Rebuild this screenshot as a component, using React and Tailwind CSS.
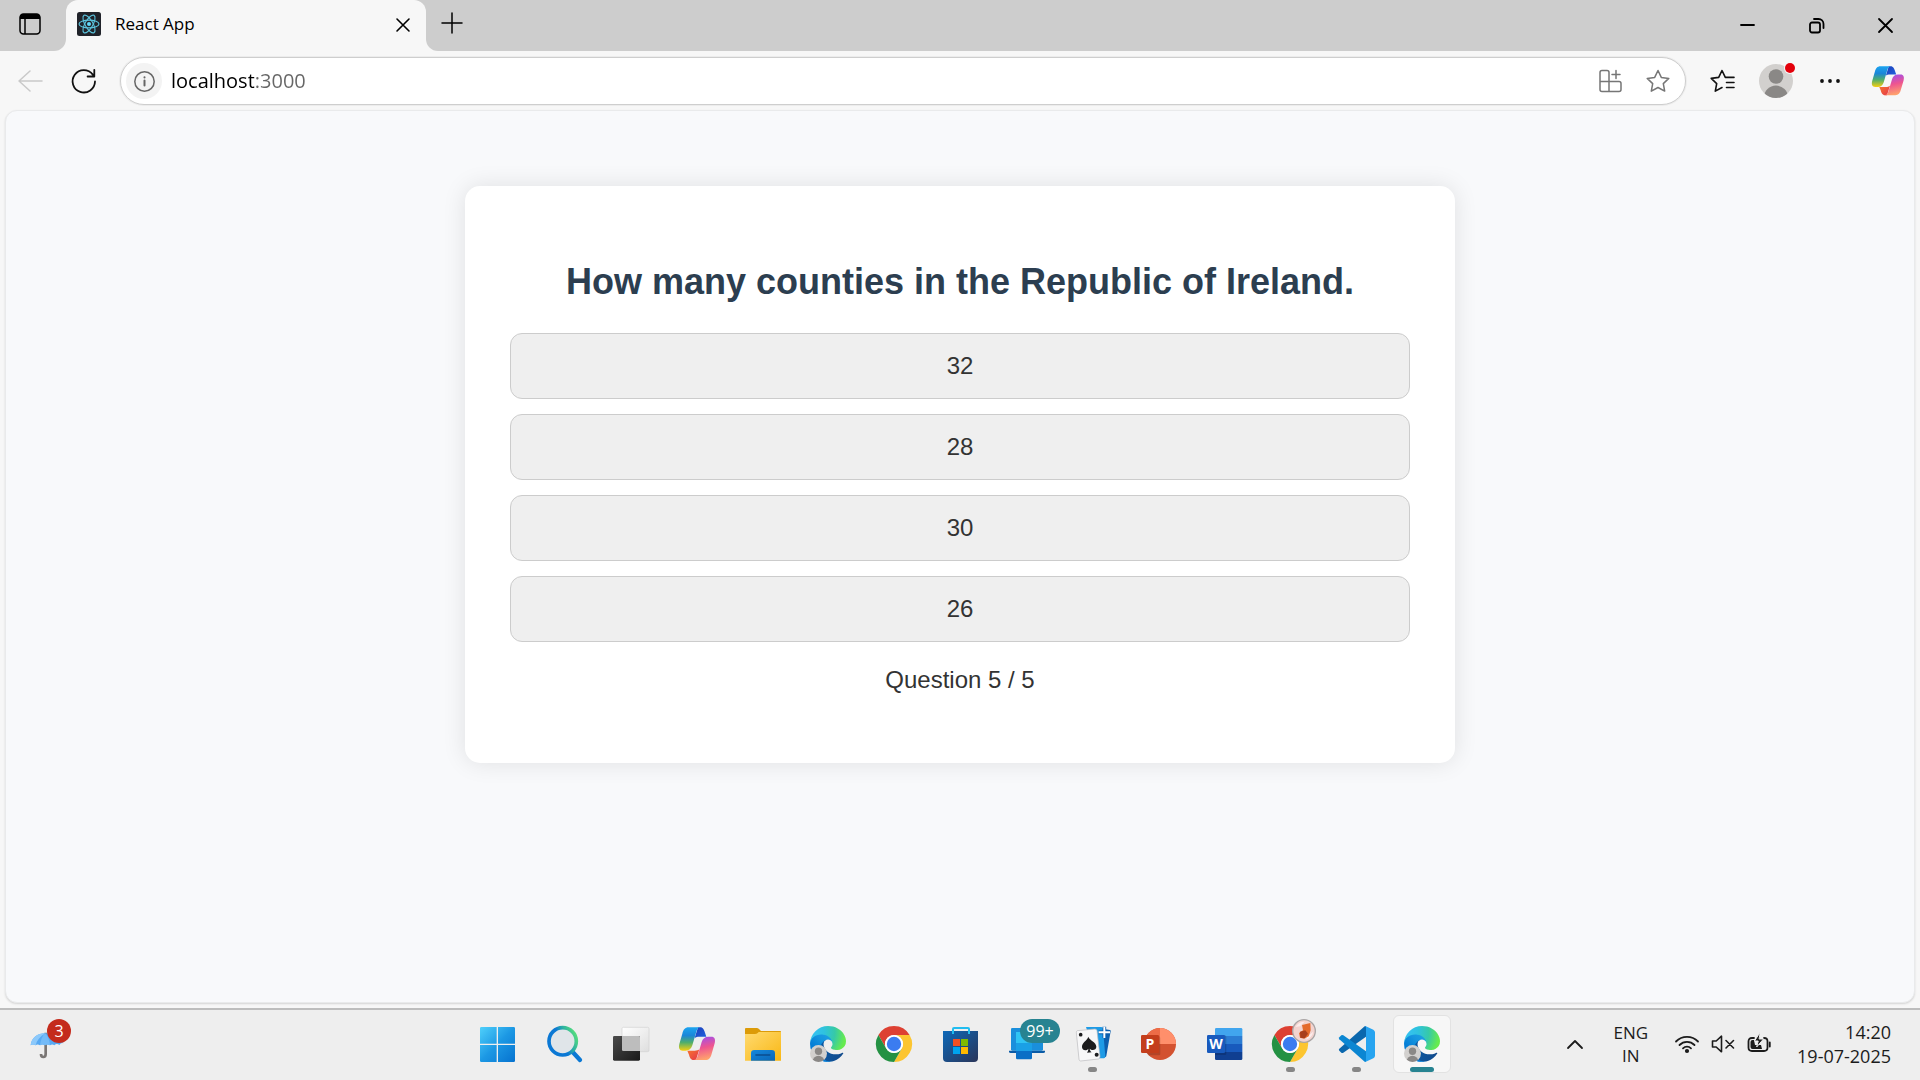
import React, { useId, useState } from "react";

const UI = "font-['Open_Sans','Noto_Sans',sans-serif]";

function Icon({ className = "", box = "0 0 24 24", children, ...rest }) {
  return (
    <svg viewBox={box} fill="none" aria-hidden="true" className={`shrink-0 overflow-visible ${className}`} {...rest}>
      {children}
    </svg>
  );
}

function Line({ className, box, width = 1.5, children }) {
  return (
    <Icon className={className} box={box} stroke="currentColor" strokeWidth={width} strokeLinecap="round" strokeLinejoin="round">
      {children}
    </Icon>
  );
}

function ReactLogo() {
  return (
    <Icon className="size-6">
      <rect width="24" height="24" rx="2.5" fill="#20232a" />
      <g stroke="#5cc5de" strokeWidth="1.1">
        <ellipse cx="12" cy="12" rx="10" ry="3.9" />
        <ellipse cx="12" cy="12" rx="10" ry="3.9" transform="rotate(60 12 12)" />
        <ellipse cx="12" cy="12" rx="10" ry="3.9" transform="rotate(120 12 12)" />
      </g>
      <circle cx="12" cy="12" r="2" fill="#61dafb" />
    </Icon>
  );
}

function CopilotLogo({ className }) {
  const id = useId();
  return (
    <Icon className={className} box="0 0 108 108">
      <defs>
        <linearGradient id={id + "a"} x1="0" y1="0" x2="0" y2="1">
          <stop offset="0" stopColor="#1ba4f0" />
          <stop offset=".35" stopColor="#1b86d8" />
          <stop offset=".65" stopColor="#4fae6c" />
          <stop offset="1" stopColor="#f6cf10" />
        </linearGradient>
        <linearGradient id={id + "b"} x1=".2" y1="0" x2=".4" y2="1">
          <stop offset="0" stopColor="#9b4df0" />
          <stop offset=".5" stopColor="#ee5590" />
          <stop offset="1" stopColor="#ffa36c" />
        </linearGradient>
        <linearGradient id={id + "c"} x1="0" y1="0" x2="1" y2="1">
          <stop offset="0" stopColor="#1d3fb8" />
          <stop offset="1" stopColor="#1f62e0" />
        </linearGradient>
        <linearGradient id={id + "d"} x1="0" y1="0" x2="1" y2="1">
          <stop offset="0" stopColor="#f7772e" />
          <stop offset="1" stopColor="#e4354b" />
        </linearGradient>
      </defs>
      <path d="M60 4h6c10 0 12 8 15 16l4 12H64c-6 0-10 1-14 4z" fill={`url(#${id}c)`} />
      <path d="M54 102h-6c-10 0-13-8-15-16l-5-12h22c6 0 10-1 14-4z" fill={`url(#${id}d)`} />
      <path d="M32 4h36c-8 0-11 6-13 13L43 58c-3 10-10 16-20 16h-9C4 74 1 66 4 54l9-31C16 11 21 4 32 4z" fill={`url(#${id}a)`} />
      <path d="M82 102H46c8 0 11-6 13-13l12-41c3-10 10-16 20-16h9c10 0 13 8 10 20l-9 31c-3 12-8 19-19 19z" fill={`url(#${id}b)`} />
    </Icon>
  );
}

function WindowsLogo() {
  const id = useId();
  return (
    <Icon className="size-9" box="0 0 108 108">
      <defs>
        <linearGradient id={id} gradientUnits="userSpaceOnUse" x1="0" y1="3" x2="105" y2="108">
          <stop offset="0" stopColor="#4fd0fb" />
          <stop offset=".5" stopColor="#1c98e4" />
          <stop offset="1" stopColor="#0672cf" />
        </linearGradient>
      </defs>
      <path fill={`url(#${id})`} d="M4 3h46v50H0V7a4 4 0 0 1 4-4zM54 3h47a4 4 0 0 1 4 4v46H54zM0 57h50v51H4a4 4 0 0 1-4-4zM54 57h51v47a4 4 0 0 1-4 4H54z" />
    </Icon>
  );
}

function SearchLogo() {
  const id = useId();
  return (
    <Icon className="size-9" box="0 0 108 108">
      <defs>
        <linearGradient id={id} x1="0" y1=".7" x2="1" y2=".2">
          <stop offset=".45" stopColor="#0b78d4" />
          <stop offset=".7" stopColor="#2fb3a0" />
          <stop offset="1" stopColor="#58e07a" />
        </linearGradient>
      </defs>
      <path d="M80 78l22 24" stroke="#0b78d4" strokeWidth="13" strokeLinecap="round" />
      <circle cx="50" cy="46" r="41" fill="#e0e5e9" stroke={`url(#${id})`} strokeWidth="11" />
    </Icon>
  );
}

function TaskViewLogo() {
  const id = useId();
  return (
    <Icon className="size-9" box="0 0 108 108">
      <defs>
        <linearGradient id={id + "a"} x1="0" y1="0" x2="1" y2="1">
          <stop offset="0" stopColor="#4a4a4a" />
          <stop offset="1" stopColor="#191919" />
        </linearGradient>
        <linearGradient id={id + "b"} x1="0" y1="0" x2="1" y2="1">
          <stop offset="0" stopColor="#fff" />
          <stop offset="1" stopColor="#dedede" />
        </linearGradient>
      </defs>
      <rect x="30" y="4" width="81" height="73" rx="4" fill={`url(#${id}b)`} stroke="#d2d2d2" strokeWidth="2" />
      <rect x="3" y="30" width="81" height="74" rx="4" fill={`url(#${id}a)`} />
      <path d="M30 30h50a4 4 0 0 1 4 4v41H34a4 4 0 0 1-4-4z" fill="#bdbdbd" />
    </Icon>
  );
}

function FolderLogo() {
  const id = useId();
  return (
    <Icon className="size-9" box="0 0 108 108">
      <defs>
        <linearGradient id={id + "a"} x1="0" y1="0" x2="1" y2="1">
          <stop offset="0" stopColor="#ffda70" />
          <stop offset="1" stopColor="#f9b714" />
        </linearGradient>
        <linearGradient id={id + "b"} x1="0" y1="0" x2="1" y2="1">
          <stop offset="0" stopColor="#1688dc" />
          <stop offset="1" stopColor="#0a66b8" />
        </linearGradient>
      </defs>
      <path d="M3 8q0-2 3-2h32q4 0 7 3l6 6h58q2 0 2 3v14H3z" fill="#dc9b08" />
      <path d="M3 24h30q5 0 8-3l3-3h67v86H3z" fill={`url(#${id}a)`} />
      <path d="M21 104V82q0-10 10-10h52q10 0 10 10v22z" fill={`url(#${id}b)`} />
      <path d="M36 87h41" stroke="#0b4c8e" strokeWidth="5" strokeLinecap="round" />
    </Icon>
  );
}

function Avatar({ className }) {
  const id = useId();
  return (
    <Icon className={className} box="0 0 34 34">
      <clipPath id={id}>
        <circle cx="17" cy="17" r="17" />
      </clipPath>
      <circle cx="17" cy="17" r="17" fill="#d2d0ce" />
      <g clipPath={`url(#${id})`} fill="#8a8886">
        <circle cx="17" cy="12.5" r="7.3" />
        <circle cx="17" cy="33.5" r="12" />
      </g>
    </Icon>
  );
}

function EdgeLogo() {
  const id = useId();
  return (
    <span className="relative block size-9">
      <Icon className="size-9" box="0 0 256 256">
        <defs>
          <linearGradient id={id + "a"} gradientUnits="userSpaceOnUse" x1="63" y1="177" x2="241" y2="177">
            <stop offset="0" stopColor="#0c59a4" />
            <stop offset="1" stopColor="#114a8b" />
          </linearGradient>
          <linearGradient id={id + "b"} gradientUnits="userSpaceOnUse" x1="157" y1="95" x2="46" y2="220">
            <stop offset="0" stopColor="#1b9de2" />
            <stop offset=".3" stopColor="#1595df" />
            <stop offset=".7" stopColor="#0680d7" />
            <stop offset="1" stopColor="#0078d4" />
          </linearGradient>
          <radialGradient id={id + "c"} gradientUnits="userSpaceOnUse" cx="26" cy="45" r="250">
            <stop offset="0" stopColor="#35c1f1" />
            <stop offset=".3" stopColor="#2fc2df" />
            <stop offset=".6" stopColor="#36c9a8" />
            <stop offset=".9" stopColor="#66eb4e" />
          </radialGradient>
        </defs>
        <path
          transform="translate(-4.6 -4.9)"
          fill={`url(#${id}a)`}
          d="M235.68 195.46a93.73 93.73 0 0 1-10.54 4.71 101.87 101.87 0 0 1-35.9 6.46c-47.32 0-88.54-32.55-88.54-74.32A31.48 31.48 0 0 1 117.13 105c-42.8 1.8-53.8 46.4-53.8 72.53 0 73.88 68.09 81.37 82.76 81.37 7.91 0 19.84-2.3 27-4.56l1.31-.44a128.34 128.34 0 0 0 66.6-52.8 4 4 0 0 0-5.32-5.64Z"
        />
        <path
          fill={`url(#${id}b)`}
          d="M105.73 241.42a79.2 79.2 0 0 1-22.74-21.34 80.72 80.72 0 0 1 29.53-120c3.12-1.47 8.45-4.13 15.54-4a32.35 32.35 0 0 1 25.69 13 31.88 31.88 0 0 1 6.36 18.66c0-.21 24.46-79.6-80-79.6-43.9 0-80 41.66-80 78.21a130.15 130.15 0 0 0 12.11 56 128 128 0 0 0 156.38 67.11 75.55 75.55 0 0 1-62.78-8Z"
        />
        <path
          fill={`url(#${id}c)`}
          d="M152.29 148.86c-.81 1.05-3.3 2.5-3.3 5.66 0 2.61 1.7 5.12 4.72 7.23 14.38 10 41.49 8.68 41.56 8.68a59.56 59.56 0 0 0 30.27-8.35 61.38 61.38 0 0 0 30.43-52.88c.26-22.41-8-37.31-11.34-43.91C223.45 23.93 177.73 0 128 0A128 128 0 0 0 0 126.2c.48-36.54 36.8-66.05 80-66.05 3.5 0 23.46.34 42 10.07 16.34 8.58 24.9 18.94 30.85 29.21 6.18 10.67 7.28 24.15 7.28 29.52 0 5.37-2.74 13.33-7.84 19.91Z"
        />
      </Icon>
      <span className="absolute bottom-0 left-0">
        <Avatar className="size-[17px]" />
      </span>
    </span>
  );
}

function ChromeLogo() {
  const arc = "M7.2 27a54 54 0 0 1 93.6 0H54a27 27 0 0 0-23.4 40.5z";
  return (
    <Icon className="size-9" box="0 0 108 108">
      <path d={arc} fill="#dd4032" />
      <path d={arc} fill="#fcc530" transform="rotate(120 54 54)" />
      <path d={arc} fill="#249143" transform="rotate(240 54 54)" />
      <circle cx="54" cy="54" r="27" fill="#fff" />
      <circle cx="54" cy="54" r="21.5" fill="#3b7cf0" />
    </Icon>
  );
}

function ChromeProfileLogo() {
  return (
    <span className="relative block size-9">
      <ChromeLogo />
      <span className="absolute -top-[7px] -right-[8px]">
        <Icon className="size-6" box="0 0 72 72">
          <circle cx="36" cy="36" r="34" fill="#f3d3cf" stroke="#a9a5a5" strokeWidth="4" />
          <path d="M10 24Q20 8 38 8L24 22zM42 62q18-6 22-24L46 52z" fill="#fbeceb" />
          <path d="M30 18l25-6 1 22-6 18-14 7-12-3-3-14 12-8z" fill="#e46a2c" />
          <path d="M24 38l16-4 8 10-10 14-13-2z" fill="#a83e1c" />
        </Icon>
      </span>
    </span>
  );
}

function StoreLogo() {
  const id = useId();
  return (
    <Icon className="size-9" box="0 0 108 108">
      <defs>
        <linearGradient id={id} x1="0" y1="0" x2="1" y2="1">
          <stop offset="0" stopColor="#0d68b8" />
          <stop offset="1" stopColor="#2a3559" />
        </linearGradient>
      </defs>
      <path d="M3 15h105v81q0 12-12 12H15Q3 108 3 96z" fill={`url(#${id})`} />
      <path d="M33 24V9q0-3 3-3h42q3 0 3 3v15" stroke="#21bdf0" strokeWidth="6" />
      <path d="M33 39h21v21H33z" fill="#f25022" />
      <path d="M57 39h21v21H57z" fill="#7fba00" />
      <path d="M33 63h21v21H33z" fill="#00a4ef" />
      <path d="M57 63h21v21H57z" fill="#ffb900" />
    </Icon>
  );
}

function PhoneLinkLogo() {
  return (
    <span className="relative block size-9">
      <Icon className="size-9" box="0 0 108 108">
        <rect x="9" y="6" width="96" height="68" rx="4" fill="#1a8fdc" />
        <path d="M3 74h108v3q0 4-5 4H8q-5 0-5-4z" fill="#0b5ba6" />
        <path d="M24 18h48v34H24z" fill="#2fc4f4" />
        <path d="M24 52h48v24H24z" fill="#1aa0e6" />
        <path d="M24 75h48v21q0 4-4 4H28q-4 0-4-4z" fill="#0a6fc6" />
      </Icon>
      <span className={`absolute -top-[7px] left-3 flex h-6 w-10 items-center justify-center rounded-full bg-[#278391] text-base text-white ${UI}`}>99+</span>
    </span>
  );
}

function SolitaireLogo() {
  return (
    <Icon className="size-9" box="0 0 108 108">
      <path d="M56 4l52 8q3 1 2 4L97 90q-1 4-4 3l-20 2z" fill="#0d5fae" />
      <path d="M36 3h46q4 1 5 5l7 84q0 4-4 5H66z" fill="#1e9be6" />
      <path d="M10 14l53-5q5 0 6 5l9 78q0 6-5 7l-53 6q-4 0-5-5L7 20q0-5 3-6z" fill="#f7f7f8" stroke="#b9b9bc" strokeWidth="2" />
      <path d="M43 32c4 12 24 16 24 30 0 10-13 13-20 6 1 6 3 9 6 11l-14 1c2-3 4-7 4-12-6 8-18 6-19-4C23 50 39 44 43 32z" fill="#1c1c1e" />
      <circle cx="20" cy="26" r="5.500" fill="#1c1c1e" />
      <circle cx="68" cy="86" r="6" fill="#1c1c1e" />
      <path d="M91 2v34M74 19h34" stroke="#0d5fae" strokeWidth="11" />
      <path d="M91 2v34M74 19h34" stroke="#fff" strokeWidth="6" />
    </Icon>
  );
}

function OfficeLetter({ children }) {
  return (
    <span className="absolute top-[9px] left-px flex size-[18px] items-center justify-center font-['Open_Sans','Noto_Sans',sans-serif] text-sm font-bold text-white" aria-hidden="true">
      {children}
    </span>
  );
}

function PowerPointLogo() {
  return (
    <span className="relative block size-9">
      <Icon className="size-9" box="0 0 108 108">
        <circle cx="60" cy="54" r="48" fill="#d35230" />
        <path d="M60 6a48 48 0 0 0-48 48h48z" fill="#ed6c47" />
        <path d="M60 6a48 48 0 0 1 48 48H60z" fill="#ff8f6b" />
        <path d="M12 30h42q7 0 7 6v48q0 4-4 4H26Q12 74 12 54z" fill="#000" opacity=".15" />
        <rect x="3" y="27" width="54" height="54" rx="4" fill="#c43e1c" />
      </Icon>
      <OfficeLetter>P</OfficeLetter>
    </span>
  );
}

function WordLogo() {
  return (
    <span className="relative block size-9">
      <Icon className="size-9" box="0 0 108 108">
        <path d="M27 30V10q0-4 4-4h74q4 0 4 4v20z" fill="#41a5ee" />
        <path d="M27 30h82v24H27z" fill="#2b7cd3" />
        <path d="M27 54h82v24H27z" fill="#185abd" />
        <path d="M27 78h82v20q0 4-4 4H31q-4 0-4-4z" fill="#103f91" />
        <path d="M27 27h28q6 0 6 6v50q0 4-4 4H27z" fill="#000" opacity=".15" />
        <rect x="3" y="27" width="54" height="54" rx="4" fill="#185abd" />
      </Icon>
      <OfficeLetter>W</OfficeLetter>
    </span>
  );
}

function CodeLogo() {
  return (
    <Icon className="size-9" box="0 0 108 108">
      <path d="M80 1L84 0v32L16 80q-3 2-6 0l-6-6q-3-3 0-6z" fill="#0a67ad" />
      <path d="M80 107l4 1V76L16 28q-3-2-6 0l-6 6q-3 3 0 6z" fill="#0b86d2" />
      <path d="M82 0l24 11q5 3 5 8v70q0 5-5 8l-24 11q-2 0-3-2c3 2 5 0 5-4V6c0-4-2-6-5-4q1-2 3-2z" fill="#27a4f0" />
    </Icon>
  );
}

const apps = [
  { name: "Start", Logo: WindowsLogo },
  { name: "Search", Logo: SearchLogo },
  { name: "Task View", Logo: TaskViewLogo },
  { name: "Copilot", Logo: () => <CopilotLogo className="size-9" /> },
  { name: "File Explorer", Logo: FolderLogo },
  { name: "Edge", Logo: EdgeLogo },
  { name: "Chrome", Logo: ChromeLogo },
  { name: "Store", Logo: StoreLogo },
  { name: "Phone Link", Logo: PhoneLinkLogo },
  { name: "Solitaire", Logo: SolitaireLogo, running: true },
  { name: "PowerPoint", Logo: PowerPointLogo },
  { name: "Word", Logo: WordLogo },
  { name: "Chrome profile", Logo: ChromeProfileLogo, running: true },
  { name: "Visual Studio Code", Logo: CodeLogo, running: true },
  { name: "Edge window", Logo: EdgeLogo, active: true },
];

function TitleBar() {
  return (
    <header className="flex h-[51px] bg-[#f7f7f7] text-black">
      <button aria-label="Tab actions" className="flex w-[66px] items-center rounded-br-xl bg-[#cdcdcd] pb-[3px] pl-[19px]">
        <Icon className="size-[22px]" box="0 0 22 22">
          <rect x="1" y="1" width="20" height="20" rx="3.500" stroke="currentColor" strokeWidth="1.500" />
          <path d="M1 6V4q0-3 3-3h14q3 0 3 3v2z" fill="currentColor" />
          <path d="M6 6v15" stroke="currentColor" strokeWidth="1.500" />
        </Icon>
      </button>
      <div className="w-[360px] bg-[#cdcdcd]">
        <div className="flex h-full items-center rounded-t-xl bg-[#f7f7f7] pr-[15px] pb-[3px] pl-[11px]">
          <ReactLogo />
          <span className={`ml-[14px] flex-1 text-[17px] ${UI}`}>React App</span>
          <button aria-label="Close tab" className="p-0.5 pt-1">
            <Line className="size-3" box="0 0 12 12" width={1.6}>
              <path d="M0 0l12 12M12 0L0 12" />
            </Line>
          </button>
        </div>
      </div>
      <div className="flex flex-1 items-center rounded-bl-xl bg-[#cdcdcd]">
        <button aria-label="New tab" className="pb-[5px] pl-4">
          <Line className="size-5" box="0 0 20 20">
            <path d="M10 0v20M0 10h20" />
          </Line>
        </button>
        <div className="ml-auto flex h-full">
          <button aria-label="Minimize" className="flex w-[69px] items-center justify-center">
            <Line className="size-[15px]" box="0 0 15 15" width={1.8}>
              <path d="M1 7h13" />
            </Line>
          </button>
          <button aria-label="Restore" className="flex w-[69px] items-center justify-center">
            <Line className="size-[15px]" box="0 0 15 15" width={1.8}>
              <rect x="1" y="4.500" width="10" height="10" rx="2" />
              <path d="M5 1h4.500a5 5 0 0 1 5 5v4" />
            </Line>
          </button>
          <button aria-label="Close window" className="flex w-[69px] items-center justify-center">
            <Line className="size-[15px]" box="0 0 15 15" width={1.8}>
              <path d="M1 1l13 13M14 1L1 14" />
            </Line>
          </button>
        </div>
      </div>
    </header>
  );
}

function Toolbar() {
  const star = "M12 1.500l3.300 6.900 7.500 1-5.500 5.200 1.400 7.500L12 18.500l-6.700 3.600 1.400-7.500L1.200 9.400l7.500-1z";
  return (
    <nav aria-label="Browser toolbar" className="flex items-center px-[3px] pt-1.5 pb-[5px] text-[#111]">
      <button aria-label="Back" disabled className="flex w-[54px] justify-center text-[#c9c9c9]">
        <Line className="size-6">
          <path d="M24 12H1M12 2L1 12l11 10" />
        </Line>
      </button>
      <button aria-label="Reload" className="flex w-[54px] justify-center">
        <Line className="size-6" width={1.8}>
          <path d="M23 12.500A11.200 11.200 0 1 1 20.800 5.600L22 7.300M22.300.8v6.700h-6.700" />
        </Line>
      </button>
      <div className="mx-[9px] flex h-12 flex-1 items-center rounded-full border border-[#cecece] bg-white pr-[15px] pl-[5px] shadow-[0_0_0_1px_#ececec]">
        <button aria-label="Site information" className="flex size-9 items-center justify-center rounded-full bg-[#f3f3f3] text-[#666]">
          <Line className="size-[21px]" box="0 0 21 21">
            <circle cx="10.500" cy="10.500" r="9.700" />
            <path d="M10.500 9.500v5M10.500 6.300v.2" strokeWidth="2" />
          </Line>
        </button>
        <input
          aria-label="Address"
          defaultValue="localhost:3000"
          className={`ml-[9px] min-w-0 flex-1 bg-[linear-gradient(90deg,#000_83px,#666_83px)] bg-clip-text text-xl text-transparent caret-black outline-none ${UI}`}
        />
        <button aria-label="Install app" className="mr-6 text-[#767676]">
          <Line className="size-6">
            <path d="M11 22.500V3.500q0-2-2-2H4q-2 0-2 2v17q0 2 2 2h17q2 0 2-2v-6q0-2-2-2H2M18 1.500v8M14 5.500h8" />
          </Line>
        </button>
        <button aria-label="Add to favorites" className="text-[#767676]">
          <Line className="size-6">
            <path d={star} />
          </Line>
        </button>
      </div>
      <button aria-label="Favorites" className="flex w-[54px] justify-center">
        <Line className="size-6" width={1.6}>
          <path d="M16 8.400h-.700L12 1.500 8.700 8.400l-7.500 1 5.500 5.200-1.400 7.500 6.700-3.600M16 8.400h8M16.500 13.500H24M16.500 18.500H24" />
        </Line>
      </button>
      <button aria-label="Profile" className="flex w-[54px] justify-center">
        <span className="relative">
          <Avatar className="size-[34px]" />
          <span className="absolute -top-px -right-0.5 size-[10px] rounded-full bg-[#e3000b] ring-1 ring-[#f7f7f7]" />
        </span>
      </button>
      <button aria-label="Settings and more" className="flex w-[54px] justify-center">
        <Icon className="size-5" box="0 0 20 20">
          <circle cx="2" cy="10" r="1.900" fill="currentColor" />
          <circle cx="10" cy="10" r="1.900" fill="currentColor" />
          <circle cx="18" cy="10" r="1.900" fill="currentColor" />
        </Icon>
      </button>
      <button aria-label="Open Copilot" className="flex w-[60px] justify-center">
        <CopilotLogo className="size-8" />
      </button>
    </nav>
  );
}

function Quiz() {
  const [picked, setPicked] = useState(null);
  return (
    <main className="flex flex-1 items-start justify-center rounded-xl border border-[#e9eaeb] bg-[#f8f9fb] px-6 pt-[75px] pb-16 font-['Liberation_Sans',Arial,sans-serif] text-[#333] shadow-[0_1px_2px_#d4d4d4]">
      <section className="w-full max-w-[990px] rounded-[15px] bg-white p-[45px] text-center shadow-[0_0_23px_rgba(0,0,0,0.1)]">
        <h2 className="my-[30px] text-4xl leading-[42px] font-bold text-[#2c3e50]">How many counties in the Republic of Ireland.</h2>
        <div className="flex flex-col gap-[15px]">
          {["32", "28", "30", "26"].map((answer) => (
            <button
              key={answer}
              aria-pressed={picked === answer}
              onClick={() => setPicked(answer)}
              className="h-[66px] rounded-xl border border-[#ccc] bg-[#efefef] text-2xl text-[#333] hover:bg-[#e5e5e5]"
            >
              {answer}
            </button>
          ))}
        </div>
        <p className="my-6 text-2xl leading-7">Question 5 / 5</p>
      </section>
    </main>
  );
}

function Taskbar() {
  return (
    <footer className={`grid h-[72px] grid-cols-[1fr_auto_1fr] items-center border-t-2 border-[#bdbdbd] bg-[#eee] pb-0.5 text-[#1c1c1c] ${UI}`}>
      <button aria-label="Weather, 3 alerts" className="relative ml-[30px] size-9 justify-self-start">
        <Icon className="size-9" box="0 0 108 108">
          <path d="M47 20v64q0 9-7 9t-7-9" stroke="#7a7674" strokeWidth="8" />
          <path d="M2 58C4 36 22 22 46 22s46 16 54 30q-6-4-12 5-8-6-15 1-6-5-13 0-8-5-15 0-8-5-15 0-8-5-13 0-9-5-15 0z" fill="#57a9f3" />
          <path d="M2 58C4 36 22 22 46 22 30 32 20 44 17 58q-9-5-15 0z" fill="#8cc9fb" />
          <path d="M46 22C36 30 32 44 30 58q8-5 15 0 8-5 15 0-2-22-14-36z" fill="#74bbf8" />
        </Icon>
        <span className="absolute -top-[7px] -right-[5px] flex size-6 items-center justify-center rounded-full bg-[#c42b1c] text-base text-white">3</span>
      </button>
      <div className="flex">
        {apps.map(({ name, Logo, running, active }) => (
          <div key={name} className="flex w-[66px] justify-center">
            <button
              aria-label={name}
              className={`relative flex size-[58px] items-center justify-center rounded-md border ${active ? "border-[#e2e2e2] bg-[#f7f7f7]" : "border-transparent"}`}
            >
              <Logo />
              {running && <span className="absolute bottom-0 h-[5px] w-[9px] rounded-full bg-[#868686]" />}
              {active && <span className="absolute bottom-0 h-[5px] w-6 rounded-full bg-[#278391]" />}
            </button>
          </div>
        ))}
      </div>
      <div className="flex items-center justify-self-end pr-[29px]">
        <button aria-label="Show hidden icons" className="mr-[30px]">
          <Line className="h-[9px] w-4" box="0 0 16 9" width={1.8}>
            <path d="M1 8l7-7 7 7" />
          </Line>
        </button>
        <button className="mr-[27px] text-center text-[17px] leading-[23px]">
          ENG
          <br />
          IN
        </button>
        <button aria-label="Network, volume and battery" className="mr-[26px] flex items-center gap-3">
          <Line className="size-6" width={1.8}>
            <path d="M1 9.500a15.500 15.500 0 0 1 22 0M4.500 13a10.600 10.600 0 0 1 15 0M8 16.300a5.700 5.700 0 0 1 8 0" />
            <circle cx="12" cy="19" r="1.200" fill="currentColor" />
          </Line>
          <Line className="size-6" width={1.6}>
            <path d="M1.500 9h3.700l5.300-4.800v15.600L5.200 15H1.500zM15 8.500l7.500 7.500M22.500 8.500L15 16" />
          </Line>
          <Line className="size-6" width={1.8}>
            <path d="M7 6H5q-3.500 0-3.500 3.500v6Q1.500 19 5 19h12q3.500 0 3.500-3.500v-6Q20.500 6 17 6M22.800 10.500v4" />
            <path d="M7 8H5.500Q3.500 8 3.500 10v5q0 2 2 2H15l-1-4H8z" fill="currentColor" stroke="none" />
            <path d="M13 .5L7.500 9h3.700l-1.500 6 6.800-8h-4z" fill="currentColor" stroke="#eee" strokeWidth="1" />
          </Line>
        </button>
        <button className="text-right text-lg leading-6">
          14:20
          <br />
          19-07-2025
        </button>
      </div>
    </footer>
  );
}

export default function App() {
  return (
    <div className="flex min-h-screen flex-col bg-[#f7f7f7]">
      <TitleBar />
      <Toolbar />
      <div className="flex flex-1 flex-col px-[5px] pb-[5px]">
        <Quiz />
      </div>
      <Taskbar />
    </div>
  );
}
